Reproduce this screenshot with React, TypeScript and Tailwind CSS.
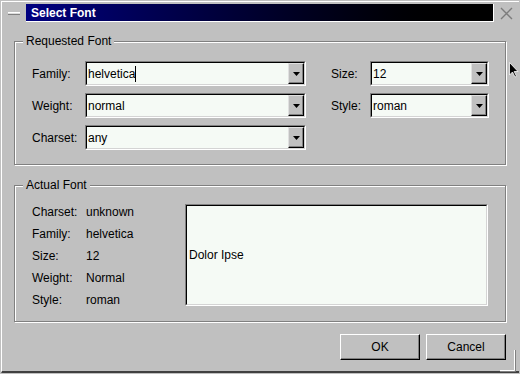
import React from "react";

const sunken =
  "border-t border-l border-[#808080] border-b border-r border-b-white border-r-white";
const sunkenInner =
  "border-t border-l border-black border-b border-r border-b-[#d4d4d4] border-r-[#d4d4d4]";

const Combo = ({ value, width, caret }: { value: string; width: string; caret?: boolean }) => (
  <div className={`flex h-[25px] ${width} ${sunken}`}>
    <div className={`flex flex-1 bg-[#f5faf5] ${sunkenInner}`}>
      <div className="flex flex-1 items-center pl-[1px]">
        <span>{value}</span>
        {caret && <span className="w-px h-[16px] bg-black" />}
      </div>
      <div className="flex w-[16px] items-center justify-center border-t border-l border-[#e0e0e0] border-b border-r border-b-black border-r-black bg-[#c0c0c0] shadow-[inset_-1px_-1px_0_#808080]">
        <svg width="7" height="4" viewBox="0 0 7 4">
          <polygon points="0,0 7,0 3.5,4" fill="#000" />
        </svg>
      </div>
    </div>
  </div>
);

const Group = ({
  title,
  height,
  className,
  children,
}: {
  title: string;
  height: string;
  className: string;
  children: React.ReactNode;
}) => (
  <div
    className={`relative ml-[12px] w-[492px] ${height} ${className} border border-[#808080] shadow-[inset_1px_1px_0_#fff,1px_1px_0_#fff]`}
  >
    <span className="absolute left-[8px] top-[-8px] bg-[#c0c0c0] px-[3px] leading-[14px]">
      {title}
    </span>
    {children}
  </div>
);

const Button = ({ label }: { label: string }) => (
  <button className="flex h-[26px] w-[80px] items-center justify-center border-t border-l border-white border-b border-r border-b-black border-r-black bg-[#c0c0c0] shadow-[inset_-1px_-1px_0_#808080]">
    {label}
  </button>
);

export default function App() {
  const actual = [
    ["Charset:", "unknown"],
    ["Family:", "helvetica"],
    ["Size:", "12"],
    ["Weight:", "Normal"],
    ["Style:", "roman"],
  ];

  return (
    <div className="relative h-[374px] w-[520px] overflow-hidden bg-[#c0c0c0] p-px font-['Liberation_Sans',Arial,sans-serif] text-[12px] leading-[14px] text-black">
      <div className="flex h-full flex-col border-t border-l border-white border-b-2 border-b-[#404040]">
        {/* title row */}
        <div className="mt-[2px] flex h-[18px] items-center">
          <div className="w-[24px] pl-[6px]">
            <div className="h-[3px] w-[12px] border-t border-white bg-[#dcdcdc] border-b border-b-[#808080]" />
          </div>
          <div className="flex h-[18px] w-[468px] items-center border-b border-r border-white bg-linear-to-r from-[#000080] to-black pl-[5px] font-bold text-white">
            Select Font
          </div>
          <svg className="ml-[6px]" width="13" height="13" viewBox="0 0 13 13">
            <path d="M1 1 L12 12 M12 1 L1 12" stroke="#7c7c7c" strokeWidth="1.4" />
          </svg>
        </div>

        {/* requested */}
        <Group title="Requested Font" height="h-[124px]" className="mt-[19px]">
          <div className="flex pl-[17px] pt-[19px]">
            <div className="flex flex-col gap-[7px]">
              <div className="flex items-center">
                <span className="w-[53px]">Family:</span>
                <Combo value="helvetica" width="w-[221px]" caret />
              </div>
              <div className="flex items-center">
                <span className="w-[53px]">Weight:</span>
                <Combo value="normal" width="w-[221px]" />
              </div>
              <div className="flex items-center">
                <span className="w-[53px]">Charset:</span>
                <Combo value="any" width="w-[221px]" />
              </div>
            </div>
            <div className="ml-[25px] flex flex-col gap-[7px]">
              <div className="flex items-center">
                <span className="w-[39px]">Size:</span>
                <Combo value="12" width="w-[119px]" />
              </div>
              <div className="flex items-center">
                <span className="w-[39px]">Style:</span>
                <Combo value="roman" width="w-[119px]" />
              </div>
            </div>
          </div>
        </Group>

        {/* actual */}
        <Group title="Actual Font" height="h-[137px]" className="mt-[20px]">
          <div className="flex pl-[17px] pt-[15px]">
            <div className="flex w-[153px] flex-col">
              {actual.map(([k, v]) => (
                <div key={k} className="flex h-[22px] items-center">
                  <span className="w-[54px]">{k}</span>
                  <span>{v}</span>
                </div>
              ))}
            </div>
            <div className={`mt-[3px] flex h-[102px] w-[303px] ${sunken}`}>
              <div className={`flex flex-1 items-center bg-[#f5faf5] pl-[2px] ${sunkenInner}`}>
                Dolor Ipse
              </div>
            </div>
          </div>
        </Group>

        {/* buttons */}
        <div className="ml-[12px] mt-[12px] flex w-[492px] justify-end gap-[6px]">
          <Button label="OK" />
          <Button label="Cancel" />
        </div>
      </div>

      {/* resize grip corner */}
      <svg className="absolute right-[4px] bottom-[2px]" width="16" height="22" viewBox="0 0 16 22">
        <path d="M14.5 0 V20.5 H0" stroke="#fff" fill="none" />
        <path d="M15.5 0 V21.5 H0" stroke="#808080" fill="none" />
      </svg>

      {/* mouse pointer */}
      <svg className="absolute left-[509px] top-[62px]" width="10" height="16" viewBox="0 0 10 16">
        <path d="M0.5 0.5 L0.5 13 L3.5 10 L6 15 L7.5 14.3 L5.2 9.5 L9 9.5 Z" fill="#000" stroke="#fff" strokeWidth="0.8" />
      </svg>
    </div>
  );
}
